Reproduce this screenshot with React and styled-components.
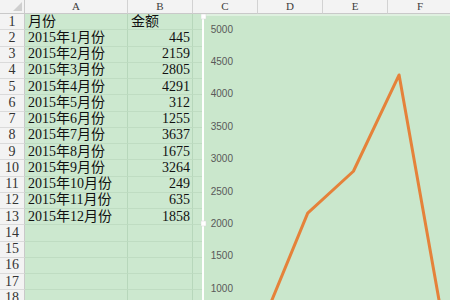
import styled, { createGlobalStyle } from "styled-components";

const GlobalStyle = createGlobalStyle`
  html, body {
    margin: 0;
    padding: 0;
    background: #cce8cf;
    overflow: hidden;
  }
`;

const months = [445, 2159, 2805, 4291, 312, 1255, 3637, 1675, 3264, 249, 635, 1858];
const letters = ["A", "B", "C", "D", "E", "F"];
const ROW_H = 16.25;

const Page = styled.div`
  position: relative;
  width: 450px;
  height: 300px;
  overflow: hidden;
`;

const Sheet = styled.div`
  display: grid;
  grid-template-columns: 25px 103px 65px 65px 65px 65px 65px;
  grid-template-rows: 14px repeat(18, ${ROW_H}px);
  font-family: "Liberation Serif", "Noto Sans CJK SC", serif;
  font-size: 14px;
  color: #111;
`;

const Corner = styled.div`
  position: relative;
  background: #f3f3f3;
  border-right: 1px solid #c9c9c9;
  border-bottom: 1px solid #c9c9c9;
  box-sizing: border-box;
  &::after {
    content: "";
    position: absolute;
    right: 2px;
    bottom: 2px;
    border-left: 9px solid transparent;
    border-bottom: 9px solid #cfcfcf;
  }
`;

const ColHead = styled.div`
  display: flex;
  align-items: center;
  justify-content: center;
  background: #f3f3f3;
  border-right: 1px solid #d2d2d2;
  border-bottom: 1px solid #c9c9c9;
  box-sizing: border-box;
  font-size: 11px;
  color: #3c3c3c;
  line-height: 1;
`;

const RowHead = styled.div`
  display: flex;
  align-items: center;
  justify-content: center;
  background: #f3f3f3;
  border-right: 1px solid #c9c9c9;
  border-bottom: 1px solid #dadada;
  box-sizing: border-box;
  color: #333;
  line-height: 1;
`;

const Cell = styled.div`
  display: flex;
  align-items: center;
  justify-content: ${(p) => (p.$num ? "flex-end" : "flex-start")};
  padding: 0 ${(p) => (p.$num ? "2px" : "0")} 0 ${(p) => (p.$num ? "0" : "3px")};
  background: #cce8cf;
  border-right: 1px solid #b7d7bb;
  border-bottom: 1px solid #bfdcc2;
  box-sizing: border-box;
  white-space: nowrap;
  line-height: 1;
`;

const ChartBox = styled.div`
  position: absolute;
  left: 201px;
  top: 14px;
  width: 260px;
  height: 300px;
`;

const axis = [5000, 4500, 4000, 3500, 3000, 2500, 2000, 1500, 1000];
const yOf = (v) => 15 + (5000 - v) * 0.0648;
const xOf = (i) => 61 + i * 45.7;

function Chart() {
  const pts = months.map((v, i) => `${xOf(i)},${yOf(v)}`).join(" ");
  return (
    <ChartBox>
      <svg width="260" height="300">
        <rect x="1" y="0" width="259" height="300" fill="#cae7cc" />
        <line x1="1" y1="1" x2="260" y2="1" stroke="#e6f3e7" strokeWidth="1.5" />
        <line x1="2" y1="0" x2="2" y2="300" stroke="#ffffff" strokeWidth="2" />
        <rect x="0" y="0" width="5" height="5" fill="#fff" stroke="#d5d5d5" strokeWidth="0.5" />
        <rect x="0" y="207" width="5" height="5" fill="#fff" stroke="#d5d5d5" strokeWidth="0.5" />
        {axis.map((v) => (
          <text
            key={v}
            x="32"
            y={yOf(v) + 3.5}
            textAnchor="end"
            fontFamily="'Liberation Sans', Arial, sans-serif"
            fontSize="10"
            fill="#595959"
          >
            {v}
          </text>
        ))}
        <polyline
          points={pts}
          fill="none"
          stroke="#e5823a"
          strokeWidth="3"
          strokeLinejoin="round"
        />
      </svg>
    </ChartBox>
  );
}

export default function App() {
  const rows = [];
  for (let r = 1; r <= 18; r++) {
    let a = "";
    let b = "";
    if (r === 1) {
      a = "月份";
      b = "金额";
    } else if (r <= 13) {
      a = `2015年${r - 1}月份`;
      b = months[r - 2];
    }
    rows.push(
      <RowHead key={`h${r}`}>{r}</RowHead>,
      <Cell key={`a${r}`}>{a}</Cell>,
      <Cell key={`b${r}`} $num={r > 1}>
        {b}
      </Cell>,
      <Cell key={`c${r}`} />,
      <Cell key={`d${r}`} />,
      <Cell key={`e${r}`} />,
      <Cell key={`f${r}`} />
    );
  }
  return (
    <Page>
      <GlobalStyle />
      <Sheet>
        <Corner />
        {letters.map((l) => (
          <ColHead key={l}>{l}</ColHead>
        ))}
        {rows}
      </Sheet>
      <Chart />
    </Page>
  );
}
